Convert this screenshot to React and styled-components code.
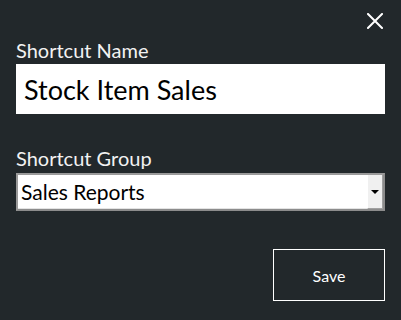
import React from "react";
import styled, { createGlobalStyle } from "styled-components";

const Global = createGlobalStyle`
  html, body { margin: 0; padding: 0; background: #22282b; }
  * { box-sizing: border-box; }
`;

const FONT = `"Lato", "Open Sans", sans-serif`;

const Dialog = styled.div`
  width: 401px;
  height: 320px;
  background: #22282b;
  padding: 0 16px;
  display: flex;
  flex-direction: column;
  font-family: ${FONT};
  color: #f2f2f2;
`;

const Header = styled.div`
  height: 40px;
  display: flex;
  justify-content: flex-end;
  align-items: flex-start;
  padding-top: 13px;
`;

const CloseButton = styled.button`
  width: 16px;
  height: 16px;
  margin-right: 2px;
  padding: 0;
  border: none;
  background: transparent;
  display: block;
  cursor: pointer;
  svg { display: block; }
`;

const Label = styled.div`
  font-size: 20px;
  line-height: 20px;
  height: 20px;
  color: #f2f2f2;
  margin-top: ${(p) => p.$top || 0}px;
  margin-bottom: ${(p) => p.$bottom || 0}px;
  white-space: nowrap;
`;

const TextInput = styled.input`
  width: 100%;
  height: 50px;
  border: none;
  outline: none;
  background: #fff;
  color: #000;
  font-family: ${FONT};
  font-size: 27px;
  padding: 0 8px;
  margin: 0;
`;

const Combo = styled.div`
  height: 38px;
  display: flex;
  align-items: stretch;
  background: #fff;
  border: 2px solid #9a9a9a;
  border-right-color: #8c8c8c;
  border-bottom-color: #8c8c8c;
`;

const ComboText = styled.div`
  flex: 1;
  display: flex;
  align-items: center;
  padding-left: 3px;
  font-size: 21px;
  color: #000;
  white-space: nowrap;
  border-bottom: 1px solid #e3e3e3;
`;

const ComboButton = styled.div`
  width: 16px;
  background: #f0f0f0;
  border-left: 1px solid #ffffff;
  border-right: 1px solid #a0a0a0;
  border-bottom: 1px solid #a0a0a0;
  display: flex;
  align-items: center;
  justify-content: center;
`;

const Arrow = styled.div`
  width: 0;
  height: 0;
  border-left: 4px solid transparent;
  border-right: 4px solid transparent;
  border-top: 4px solid #000;
  margin-top: 1px;
`;

const Footer = styled.div`
  margin-top: 38px;
  display: flex;
  justify-content: flex-end;
`;

const SaveButton = styled.button`
  width: 112px;
  height: 52px;
  background: #22282b;
  border: 1px solid #ffffff;
  color: #ffffff;
  font-family: ${FONT};
  font-size: 16px;
  padding: 0;
  cursor: pointer;
`;

export default function App() {
  return (
    <>
      <Global />
      <Dialog>
        <Header>
          <CloseButton aria-label="Close">
            <svg width="16" height="16" viewBox="0 0 16 16">
              <path d="M1 1 L15 15 M15 1 L1 15" stroke="#fff" strokeWidth="2" strokeLinecap="square" fill="none" />
            </svg>
          </CloseButton>
        </Header>
        <Label $bottom={4}>Shortcut Name</Label>
        <TextInput defaultValue="Stock Item Sales" />
        <Label $top={34} $bottom={5}>Shortcut Group</Label>
        <Combo>
          <ComboText>Sales Reports</ComboText>
          <ComboButton>
            <Arrow />
          </ComboButton>
        </Combo>
        <Footer>
          <SaveButton>Save</SaveButton>
        </Footer>
      </Dialog>
    </>
  );
}
